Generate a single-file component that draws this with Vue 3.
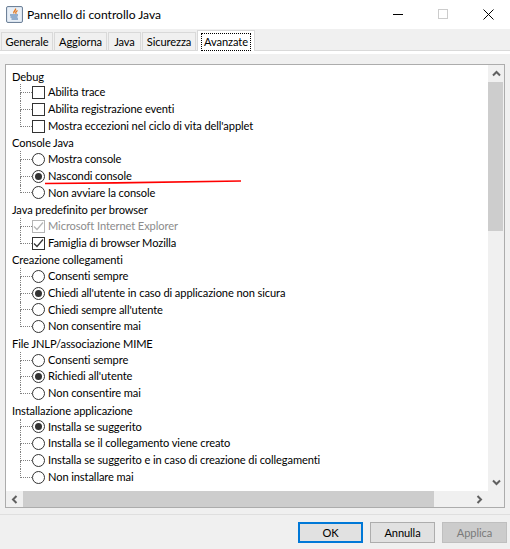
<template>
  <div class="window">
    <header class="titlebar">
      <svg class="app-icon" width="17" height="17" viewBox="0 0 17 17">
        <rect x="0.5" y="0.5" width="16" height="16" rx="1.500" fill="#dbe5f0" stroke="#6f8299" />
        <rect x="2" y="2" width="13" height="13" fill="#e9eff6" />
        <path d="M9.500 2.500c1 2-3 2.500-1.500 5M11.500 4.500c-1.500 1-2.500 2-1.200 3.200" fill="none" stroke="#e3761c" stroke-width="1.300" />
        <path d="M4 9h8M4.500 11h7M5.500 13h6.500" fill="none" stroke="#3c6ea6" stroke-width="1.100" />
      </svg>
      <span class="title">Pannello di controllo Java</span>
      <div class="win-controls">
        <svg width="11" height="11" viewBox="0 0 11 11"><path d="M0 5.500h10" stroke="#000" /></svg>
        <svg width="11" height="11" viewBox="0 0 11 11"><rect x="0.500" y="0.500" width="9" height="9" fill="none" stroke="#cccccc" /></svg>
        <svg width="11" height="11" viewBox="0 0 11 11"><path d="M0.500 0.500l10 10M10.500 0.500l-10 10" stroke="#000" /></svg>
      </div>
    </header>

    <nav class="tabs">
      <div v-for="tab in tabs" :key="tab" class="tab" :class="{ active: tab === 'Avanzate' }">
        <span class="tab-label">{{ tab }}</span>
      </div>
    </nav>

    <div class="tab-gap"></div>

    <main class="panel">
      <div class="scroll-pane">
        <div class="pane-top">
          <div class="tree">
            <section v-for="group in groups" :key="group.name" class="group">
              <div class="group-name">{{ group.name }}</div>
              <div v-for="(item, i) in group.items" :key="item.label" class="item" :class="{ disabled: item.disabled }">
                <span class="elbow" :class="{ last: i === group.items.length - 1 }"><i></i><i></i></span>
                <span v-if="group.type === 'check'" class="check">
                  <svg v-if="item.on" width="11" height="11" viewBox="0 0 11 11">
                    <path d="M1 5.500l3 3 6-7" fill="none" stroke="currentColor" stroke-width="1.200" />
                  </svg>
                </span>
                <span v-else class="radio"><b v-if="item.on"></b></span>
                <span class="item-label">{{ item.label }}</span>
              </div>
            </section>
          </div>
          <div class="vbar">
            <div class="arrow-btn">
              <svg width="9" height="7" viewBox="0 0 9 7"><path d="M1 5.500l3.500-3.500 3.500 3.500" fill="none" stroke="#606060" stroke-width="2" /></svg>
            </div>
            <div class="vtrack"><div class="vthumb"></div></div>
            <div class="arrow-btn">
              <svg width="9" height="7" viewBox="0 0 9 7"><path d="M1 1.500l3.500 3.500 3.500-3.500" fill="none" stroke="#606060" stroke-width="2" /></svg>
            </div>
          </div>
        </div>
        <div class="hbar">
          <div class="arrow-btn side">
            <svg width="7" height="9" viewBox="0 0 7 9"><path d="M5.500 1l-3.500 3.500 3.500 3.500" fill="none" stroke="#606060" stroke-width="2" /></svg>
          </div>
          <div class="htrack"><div class="hthumb"></div></div>
          <div class="arrow-btn side">
            <svg width="7" height="9" viewBox="0 0 7 9"><path d="M1.500 1l3.500 3.500-3.500 3.500" fill="none" stroke="#606060" stroke-width="2" /></svg>
          </div>
          <div class="corner"></div>
        </div>
      </div>
    </main>

    <footer class="footer">
      <button class="btn primary">OK</button>
      <button class="btn">Annulla</button>
      <button class="btn off">Applica</button>
    </footer>

    <svg class="red-mark" width="510" height="549" viewBox="0 0 510 549">
      <path d="M45 183.500C110 183 180 182 241 181" fill="none" stroke="#ff0000" stroke-width="1.700" />
    </svg>
  </div>
</template>

<script setup>
const tabs = ['Generale', 'Aggiorna', 'Java', 'Sicurezza', 'Avanzate']

const groups = [
  {
    name: 'Debug',
    type: 'check',
    items: [
      { label: 'Abilita trace' },
      { label: 'Abilita registrazione eventi' },
      { label: "Mostra eccezioni nel ciclo di vita dell'applet" }
    ]
  },
  {
    name: 'Console Java',
    type: 'radio',
    items: [
      { label: 'Mostra console' },
      { label: 'Nascondi console', on: true },
      { label: 'Non avviare la console' }
    ]
  },
  {
    name: 'Java predefinito per browser',
    type: 'check',
    items: [
      { label: 'Microsoft Internet Explorer', on: true, disabled: true },
      { label: 'Famiglia di browser Mozilla', on: true }
    ]
  },
  {
    name: 'Creazione collegamenti',
    type: 'radio',
    items: [
      { label: 'Consenti sempre' },
      { label: "Chiedi all'utente in caso di applicazione non sicura", on: true },
      { label: "Chiedi sempre all'utente" },
      { label: 'Non consentire mai' }
    ]
  },
  {
    name: 'File JNLP/associazione MIME',
    type: 'radio',
    items: [
      { label: 'Consenti sempre' },
      { label: "Richiedi all'utente", on: true },
      { label: 'Non consentire mai' }
    ]
  },
  {
    name: 'Installazione applicazione',
    type: 'radio',
    items: [
      { label: 'Installa se suggerito', on: true },
      { label: 'Installa se il collegamento viene creato' },
      { label: 'Installa se suggerito e in caso di creazione di collegamenti' },
      { label: 'Non installare mai' }
    ]
  }
]
</script>

<style>
html, body {
  margin: 0;
  background: #ffffff;
}
</style>

<style scoped>
.window {
  position: relative;
  width: 510px;
  height: 549px;
  display: flex;
  flex-direction: column;
  overflow: hidden;
  background: #ffffff;
  font-family: Lato, "Noto Sans", sans-serif;
  font-size: 11.100px;
  letter-spacing: -0.100px;
  color: #000000;
}

.titlebar {
  height: 29px;
  display: flex;
  align-items: center;
  padding-left: 6px;
  flex-shrink: 0;
}
.app-icon {
  margin-right: 4px;
}
.title {
  font-size: 12.100px;
  letter-spacing: 0;
}
.win-controls {
  margin-left: auto;
  display: flex;
  align-items: center;
  gap: 34px;
  padding-right: 16px;
}

.tabs {
  height: 18px;
  padding: 3px 0 0 1px;
  display: flex;
  align-items: flex-end;
  gap: 1px;
  background: #f0f0f0;
  border-bottom: 1px solid #d9d9d9;
  flex-shrink: 0;
}
.tab {
  height: 18px;
  display: flex;
  align-items: center;
  justify-content: center;
  background: #f0f0f0;
  border: 1px solid #d9d9d9;
  border-bottom: 0;
  box-sizing: border-box;
}
.tab:nth-child(1) { width: 52px; }
.tab:nth-child(2) { width: 53px; }
.tab:nth-child(3) { width: 33px; }
.tab:nth-child(4) { width: 54px; }
.tab.active {
  width: 58px;
  height: 21px;
  margin-bottom: -1px;
  background: #ffffff;
  position: relative;
}
.tab.active .tab-label {
  width: 50px;
  height: 18px;
  box-sizing: border-box;
  border: 1px dotted #000000;
  line-height: 15px;
  text-align: center;
  margin-top: 1px;
}

.tab-gap {
  height: 3px;
  flex-shrink: 0;
}

.panel {
  flex: 1;
  background: #f0f0f0;
  padding: 10px 5px 0;
  min-height: 0;
}

.scroll-pane {
  width: 500px;
  height: 444px;
  box-sizing: border-box;
  border: 1px solid #acacac;
  display: flex;
  flex-direction: column;
  overflow: hidden;
}
.pane-top {
  height: 426px;
  display: flex;
}
.tree {
  width: 482px;
  background: #ffffff;
  padding: 2.500px 0 0 6px;
  box-sizing: border-box;
  overflow: hidden;
}

.group-name,
.item {
  height: 16.720px;
  line-height: 16.720px;
  white-space: nowrap;
}
.group-name {
  padding-top: 1px;
  box-sizing: border-box;
}
.item {
  display: flex;
  align-items: center;
  padding-left: 8px;
}
.item.disabled {
  color: #8c8c8c;
}
.elbow {
  width: 12px;
  height: 100%;
  display: flex;
  flex-direction: column;
  flex-shrink: 0;
}
.elbow i {
  display: block;
  flex: 1;
  border-left: 1px dotted #808080;
  box-sizing: border-box;
}
.elbow i:first-child {
  border-bottom: 1px dotted #808080;
}
.elbow.last i:last-child {
  border-left: 0;
}

.check {
  width: 13px;
  height: 13px;
  box-sizing: border-box;
  border: 1px solid #333333;
  background: #ffffff;
  display: flex;
  align-items: center;
  justify-content: center;
  flex-shrink: 0;
  color: #333333;
}
.disabled .check {
  border-color: #b5b5b5;
  color: #b5b5b5;
}
.radio {
  width: 13px;
  height: 13px;
  box-sizing: border-box;
  border: 1px solid #333333;
  border-radius: 50%;
  background: #ffffff;
  display: flex;
  align-items: center;
  justify-content: center;
  flex-shrink: 0;
}
.radio b {
  width: 7px;
  height: 7px;
  border-radius: 50%;
  background: #333333;
}
.item-label {
  margin-left: 3px;
}

.vbar {
  width: 16px;
  display: flex;
  flex-direction: column;
  background: #f0f0f0;
}
.arrow-btn {
  height: 17px;
  display: flex;
  align-items: center;
  justify-content: center;
  flex-shrink: 0;
}
.arrow-btn.side {
  width: 17px;
}
.vtrack {
  flex: 1;
}
.vthumb {
  width: 15px;
  height: 149px;
  background: #cdcdcd;
}
.hbar {
  height: 16px;
  display: flex;
  flex-shrink: 0;
  background: #f0f0f0;
}
.hbar .arrow-btn {
  height: 16px;
}
.htrack {
  width: 448px;
}
.hthumb {
  width: 411px;
  height: 16px;
  background: #cdcdcd;
}
.corner {
  width: 16px;
}

.footer {
  flex-shrink: 0;
  height: 35px;
  background: #f0f0f0;
  border-top: 1px solid #dfdfdf;
  box-sizing: border-box;
  display: flex;
  justify-content: flex-end;
  align-items: flex-start;
  gap: 7px;
  padding: 7px 3px 0 0;
}
.btn {
  width: 65px;
  height: 21px;
  padding: 0;
  background: #e1e1e1;
  border: 1px solid #adadad;
  font: inherit;
  letter-spacing: inherit;
  color: #000000;
}
.btn.primary {
  border: 2px solid #0078d7;
}
.btn.off {
  background: #cccccc;
  border-color: #bfbfbf;
  color: #7a7a7a;
}

.red-mark {
  position: absolute;
  left: 0;
  top: 0;
  pointer-events: none;
}
</style>
